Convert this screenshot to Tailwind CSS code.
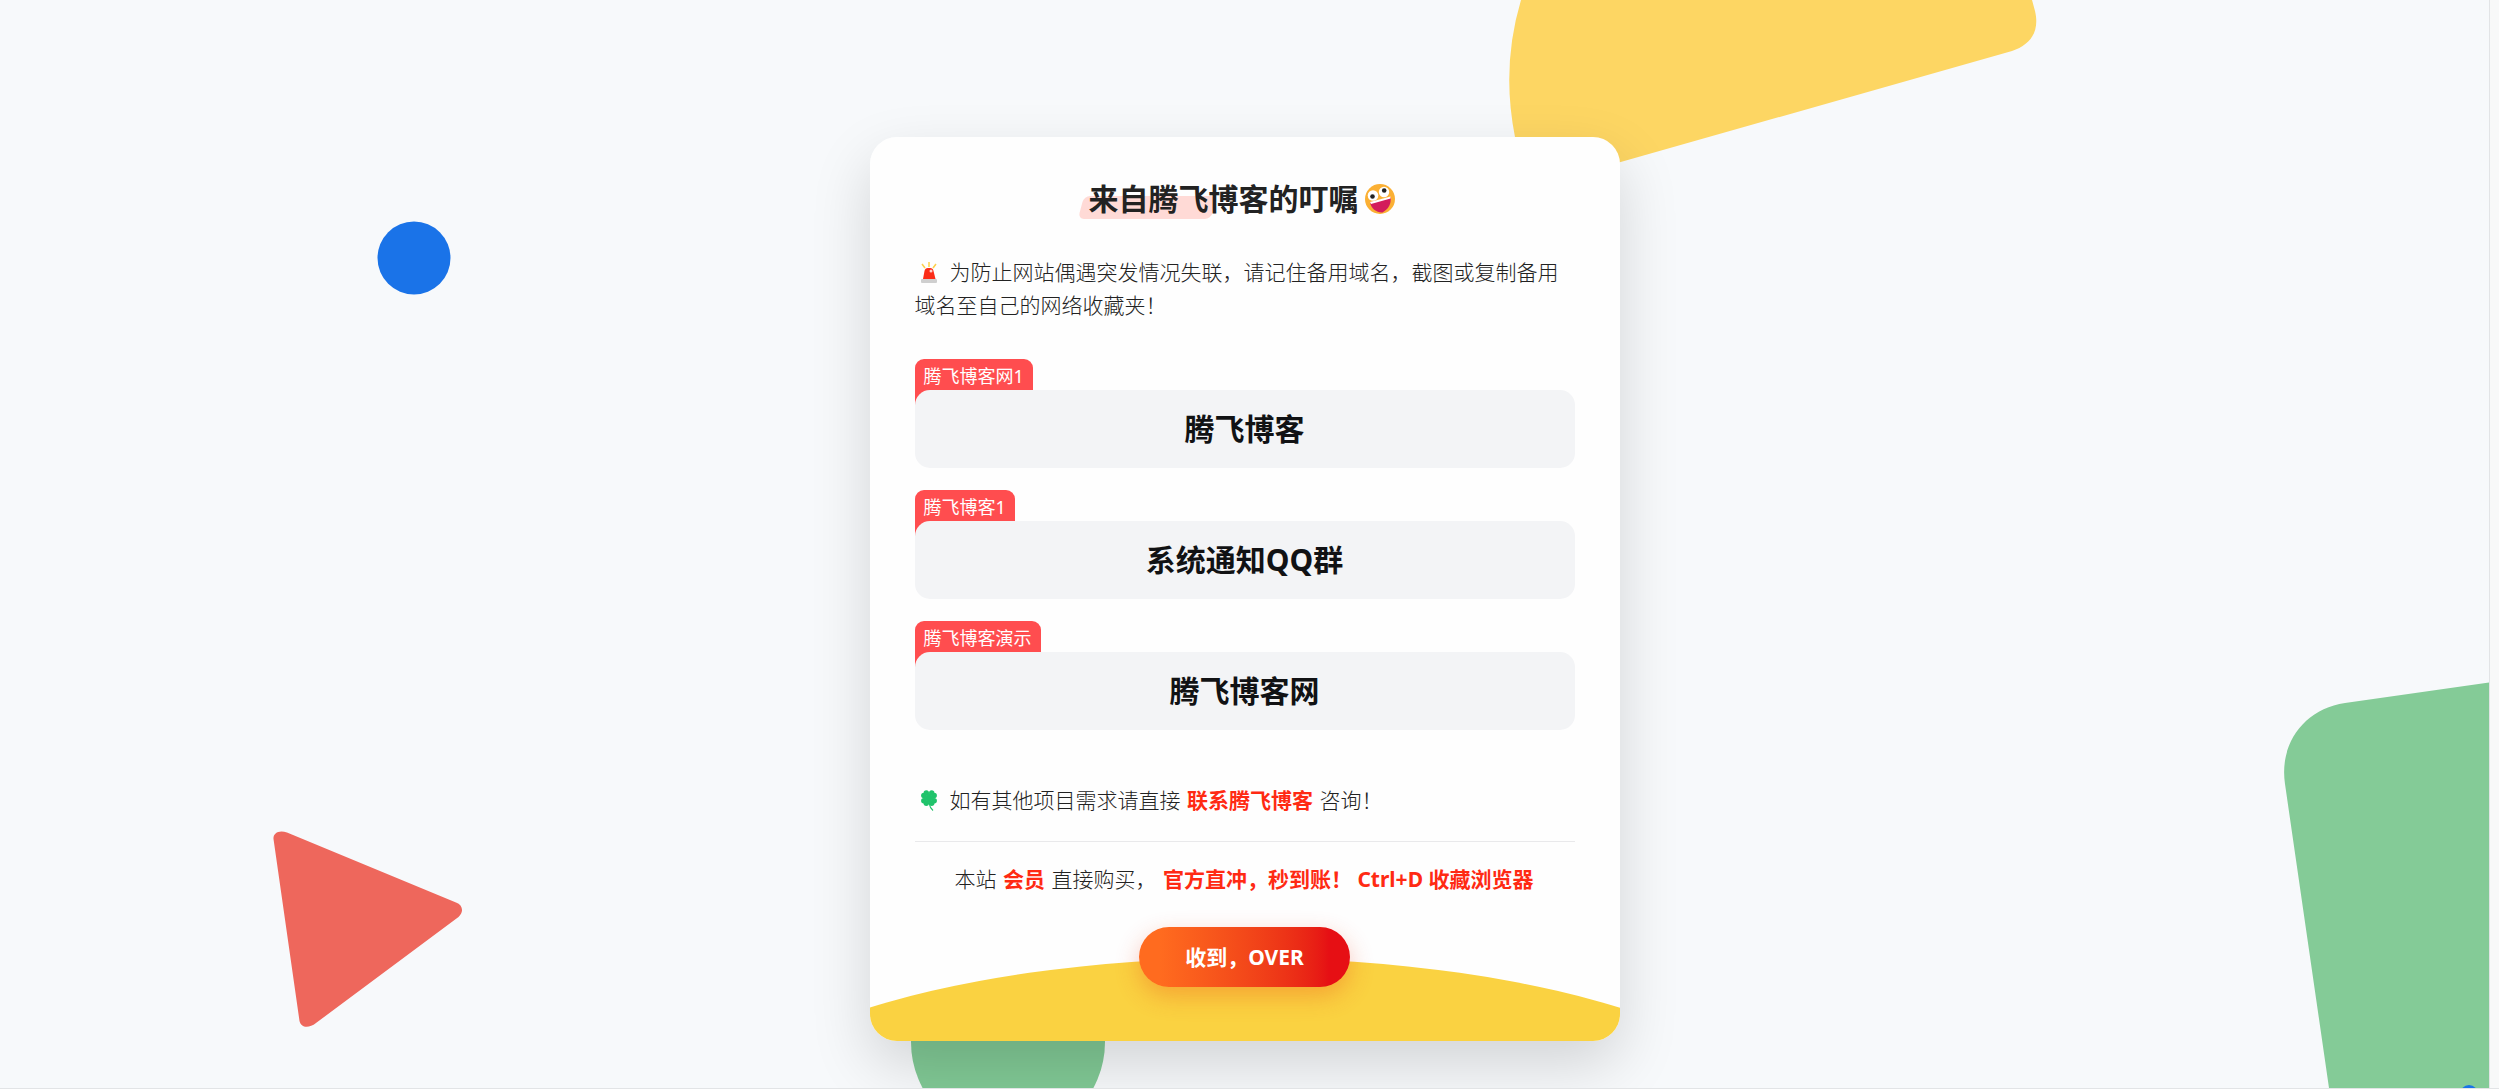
<!DOCTYPE html>
<html lang="zh-CN">
<head>
<meta charset="utf-8">
<meta name="viewport" content="width=device-width, initial-scale=1">
<title>来自腾飞博客的叮嘱</title>
<script src="https://cdn.jsdelivr.net/npm/@tailwindcss/browser@4"></script>
</head>
<body class="flex min-h-screen bg-[#f8f9f9] font-['Noto_Sans','Noto_Sans_CJK_SC',sans-serif] text-[#222222]">
<main class="relative flex min-h-screen flex-1 justify-center overflow-hidden border-r border-b border-[#e2e4e6] bg-[#f7f9fb] px-4 pt-[137px] pb-[47px]">

  <!-- background shapes -->
  <svg class="absolute top-0 left-[1500px] h-[170px] w-[540px]" viewBox="1500 0 540 170" fill="#fdd663" aria-hidden="true"><path d="M1521 0Q1501 67 1515 137L1522 190L2012 51C2030 45 2040 32 2035 11L2032 0Z"/></svg>
  <svg class="absolute right-0 bottom-0 h-[410px] w-[210px]" viewBox="2279 678 210 410" fill="#84cb97" aria-hidden="true"><path d="M2489 682.5L2345 703C2304 709 2279 744 2285 784L2329 1088H2489Z"/><circle cx="2469" cy="1094" r="9" fill="#1a73e8"/></svg>
  <svg class="absolute top-[221px] left-[377px] size-[74px]" viewBox="0 0 74 74" aria-hidden="true"><circle cx="37" cy="37" r="36.5" fill="#1a73e8"/></svg>
  <svg class="absolute top-[825px] left-[268px] h-[210px] w-[200px]" viewBox="268 825 200 210" fill="#ee675c" aria-hidden="true"><path d="M273.5 839C273 833 279 829.500 287 832.500L456 902.500C463 905 464 912 458.500 917L316 1023C309 1028.500 301 1028 299.500 1021Z"/></svg>
  <svg class="absolute bottom-0 left-[910px] h-[144px] w-[196px]" viewBox="0 0 196 144" aria-hidden="true"><circle cx="98" cy="98" r="97" fill="#81c995"/></svg>

  <div class="relative w-full max-w-[750px] self-start rounded-[27px] shadow-[0_24px_60px_rgba(0,0,0,0.15)]">
    <section class="relative isolate flex flex-col overflow-hidden rounded-[27px] bg-[#fefefe] px-[45px] pt-[44px] pb-[54px]">
      <div class="absolute -right-1/4 bottom-[-307px] -left-1/4 -z-10 h-[390px] rounded-[50%] bg-[#fad241]"></div>

      <h1 class="flex items-center justify-center text-[30px] leading-[36px] font-bold">
        <span class="relative">
          <span class="absolute top-[15px] left-[-8px] -z-10 h-[23px] w-[133px] -skew-x-15 rounded-[6px] bg-[#ffdad6]"></span>来自腾飞博客的叮嘱</span>
        <svg class="mx-[6px] size-[30px]" viewBox="0 0 30 30" aria-hidden="true"><circle cx="15" cy="15" r="15" fill="#fbb034"/><circle cx="8" cy="11.500" r="5.300" fill="#fff"/><circle cx="19" cy="8" r="5.200" fill="#fff"/><circle cx="7.500" cy="12.500" r="2.300" fill="#222"/><circle cx="19.200" cy="6.500" r="2.300" fill="#222"/><path d="M5 18.500L25.500 13C26.500 20 23.500 25 17.500 28.500C12 29 6 24.500 5 18.500Z" fill="#d31c5b"/><path d="M5 18L25.500 12.500V14.500L6 20Z" fill="#fff"/></svg>
      </h1>

      <p class="mt-[39px] text-[21px] leading-[33px] font-light"><svg class="mr-[13px] ml-[6px] inline-block h-[21px] w-[16px] align-[-3px]" viewBox="0 0 16 21" aria-hidden="true"><path d="M8 0V5M1 2L4 6M15 2L12 6" stroke="#fdd04a" stroke-width="1.500"/><path d="M2 17L3.500 9Q4 6 7 6H9Q12 6 12.500 9L14.500 17Z" fill="#fb2c17"/><circle cx="10" cy="9" r="1.500" fill="#ffd0ca"/><rect y="17" width="16" height="4" rx="1" fill="#cfcfcf"/></svg>为防止网站偶遇突发情况失联，请记住备用域名，截图或复制备用域名至自己的网络收藏夹！</p>

      <ul class="mt-[37px] flex flex-col gap-[22px]">
        <li class="flex flex-col items-start">
          <span class="-mb-[15px] rounded-t-[9px] bg-[#ff4d4f] px-[9px] pt-[4px] pb-[15px] text-[18px] leading-[27px] text-white">腾飞博客网1</span>
          <a href="#" class="w-full rounded-[15px] bg-[#f3f4f6] py-[21px] text-center text-[30px] leading-[36px] font-bold text-[#111214]">腾飞博客</a>
        </li>
        <li class="flex flex-col items-start">
          <span class="-mb-[15px] rounded-t-[9px] bg-[#ff4d4f] px-[9px] pt-[4px] pb-[15px] text-[18px] leading-[27px] text-white">腾飞博客1</span>
          <a href="#" class="w-full rounded-[15px] bg-[#f3f4f6] py-[21px] text-center text-[30px] leading-[36px] font-bold text-[#111214]">系统通知QQ群</a>
        </li>
        <li class="flex flex-col items-start">
          <span class="-mb-[15px] rounded-t-[9px] bg-[#ff4d4f] px-[9px] pt-[4px] pb-[15px] text-[18px] leading-[27px] text-white">腾飞博客演示</span>
          <a href="#" class="w-full rounded-[15px] bg-[#f3f4f6] py-[21px] text-center text-[30px] leading-[36px] font-bold text-[#111214]">腾飞博客网</a>
        </li>
      </ul>

      <p class="mt-[54px] border-b border-[#e9e9eb] pb-[24px] text-[21px] leading-[33px] font-light"><svg class="mr-[13px] ml-[6px] inline-block h-[21px] w-[16px] align-[-3px]" viewBox="0 0 16 21" fill="#20c36b" aria-hidden="true"><circle cx="5.300" cy="2.900" r="2.700"/><circle cx="10.700" cy="2.900" r="2.700"/><circle cx="2.800" cy="5.500" r="2.700"/><circle cx="13.200" cy="5.500" r="2.700"/><circle cx="2.800" cy="10.700" r="2.700"/><circle cx="13.200" cy="10.700" r="2.700"/><circle cx="5.300" cy="13.300" r="2.700"/><circle cx="10.700" cy="13.300" r="2.700"/><path d="M8 3.500L12.500 8L8 12.700L3.500 8Z"/><path d="M3 3H8V8H3ZM8 4H13V8H8ZM3 8H8V13H3ZM8 8H13V13H8Z" opacity=".9"/><path d="M8 13Q9 18 12 20.500" fill="none" stroke="#20c36b" stroke-width="1.200"/></svg>如有其他项目需求请直接 <a href="#" class="mx-px font-bold text-[#ff2a13]">联系腾飞博客</a> 咨询！</p>

      <p class="mt-[21px] text-center text-[21px] leading-[33px] font-light">本站 <a href="#" class="mx-px font-bold text-[#ff2a13]">会员</a> 直接购买， <b class="mx-px font-bold text-[#ff2a13]">官方直冲，秒到账！ Ctrl+D 收藏浏览器</b></p>

      <button type="button" class="mt-[31px] h-[60px] self-center rounded-full bg-linear-to-r from-[#ff6b1f] from-10% to-[#e60f14] to-90% px-[46px] text-[21px] leading-[30px] font-bold text-white shadow-[0_9px_24px_rgba(235,60,20,0.3)]">收到，OVER</button>
    </section>
  </div>
</main>
<div class="w-[9px] shrink-0 border-b border-[#e2e4e6]"></div>
</body>
</html>
